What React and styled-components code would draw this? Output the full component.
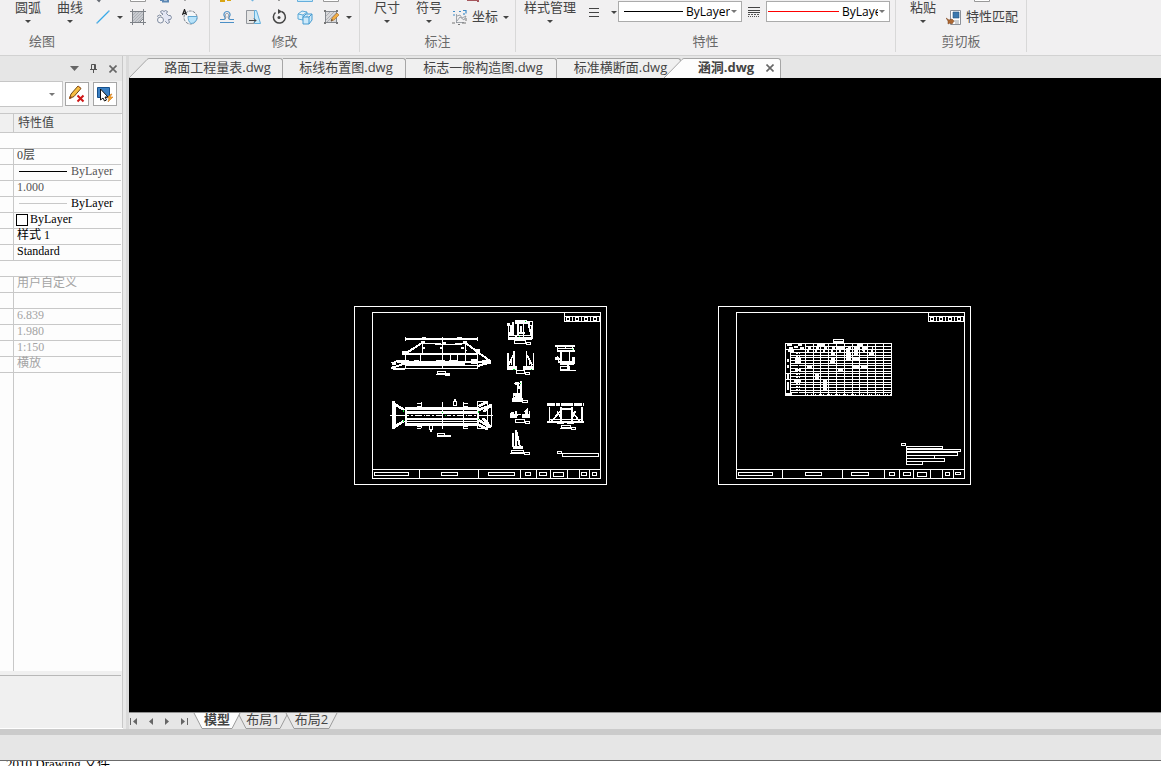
import React from "react";
import styled, { createGlobalStyle, css } from "styled-components";

const UI_FONT = '"Open Sans", "Noto Sans CJK SC", sans-serif';
const GRID_FONT = '"Liberation Serif", "Noto Sans CJK SC", serif';

const GlobalStyle = createGlobalStyle`
  *, *::before, *::after { box-sizing: border-box; }
  body { margin: 0; background: #fff; }
  button { margin: 0; padding: 0; border: 0; background: none; color: inherit; font: inherit; white-space: nowrap; }
  select { appearance: none; border: 0; padding: 0; margin: 0; background: none; font: inherit; color: inherit; min-width: 0; }
  svg { display: block; flex: none; }
`;

const Page = styled.div`
  display: flex;
  flex-direction: column;
  height: 100vh;
  overflow: hidden;
  font-family: ${UI_FONT};
  font-size: 13px;
  color: #444;
  background: #fff;
`;

/* ---------- Ribbon ---------- */
const Ribbon = styled.header`
  display: flex;
  flex: none;
  height: 56px;
  padding-bottom: 3px;
  background: #f1f0f1;
  border-bottom: 1px solid #d2d2d2;
  overflow: hidden;
`;

const Group = styled.section`
  display: flex;
  flex-direction: column;
  flex: none;
  width: ${(p) => p.$width}px;
  border-right: 1px solid #d8d8d8;
`;

const GroupBody = styled.div`
  display: flex;
  align-items: flex-start;
  height: 32px;
  padding-left: ${(p) => p.$pad}px;
`;

const GroupLabel = styled.div`
  line-height: 18px;
  color: #6a6a6a;
  text-align: center;
  ${(p) => p.$cut && css`width: 84px;`}
`;

const BigButton = styled.button`
  display: flex;
  flex-direction: column;
  align-items: center;
  gap: 6px;
  flex: none;
  width: ${(p) => p.$width || 42}px;
  line-height: 14px;
`;

const Arrow = styled.span`
  flex: none;
  border: solid transparent;
  border-width: 3px 3px 0;
  border-top-color: ${(p) => p.$color || "#444"};
`;

const ToolGrid = styled.div`
  display: grid;
  grid-template-columns: ${(p) => p.$columns};
  grid-template-rows: 4px 26px;
  align-items: center;
  justify-items: center;
`;

const Peek = styled.button`
  display: flex;
  align-self: start;
  height: 4px;
  overflow: hidden;
`;

const ToolButton = styled.button`
  display: flex;
  align-items: center;
  gap: 4px;
  line-height: 18px;
  span { padding-bottom: 2px; }
`;

const MenuButton = styled.button`
  display: flex;
  align-items: center;
  justify-content: center;
  width: ${(p) => p.$width || 12}px;
  height: 24px;
`;

const Combo = styled.label`
  display: flex;
  align-items: center;
  gap: 3px;
  flex: none;
  width: 124px;
  height: 21px;
  margin-top: 1px;
  padding: 0 4px 0 1px;
  background: #fff;
  border: 1px solid #ababab;
  color: #000;
  font-size: 12px;
  select { flex: 1; overflow: hidden; margin-right: -2px; }
`;

const Stroke = styled.svg`
  width: ${(p) => p.$width}px;
  height: 1px;
  margin-left: ${(p) => p.$indent || 0}px;
`;

/* ---------- Workspace ---------- */
const Workspace = styled.div`
  display: flex;
  flex: 1;
  min-height: 0;
  border-bottom: 6px solid #cbcbcb;
`;

const Panel = styled.aside`
  display: flex;
  flex-direction: column;
  flex: none;
  width: 123px;
  margin-bottom: 1px;
  background: #f0f0f0;
  border-right: 1px solid #c8c8c8;
`;

const Splitter = styled.div`
  flex: none;
  width: 6px;
  background: #e9e9e9;
  border-right: 3px solid #dadada;
`;

const PanelTitle = styled.div`
  display: flex;
  align-items: center;
  justify-content: flex-end;
  gap: 11px;
  height: 25px;
  padding: 0 5px 0 0;
  background: #e6e6e6;
`;

const PanelTools = styled.div`
  display: flex;
  align-items: center;
  gap: 4px;
  height: 30px;
  padding-right: 5px;
  padding-bottom: 4px;
`;

const ObjectPicker = styled.label`
  display: flex;
  align-items: center;
  flex: 1;
  height: 26px;
  margin-right: -2px;
  padding-right: 7px;
  background: #fff;
  border: 1px solid #c6c6c6;
  border-left: 0;
  select { flex: 1; }
`;

const IconButton = styled.button`
  display: grid;
  place-items: center;
  width: 24px;
  height: 24px;
  background: #fff;
  border: 1px solid #a6a6a6;
`;

const GridFrame = styled.div`
  display: flex;
  flex-direction: column;
  flex: 1;
  margin-top: 2px;
  padding-right: 1px;
  border-top: 1px solid #c8c8c8;
  background: #fdfdfd;
`;

const PropTable = styled.table`
  width: 100%;
  border-collapse: separate;
  border-spacing: 0;
  table-layout: fixed;
  font-family: ${GRID_FONT};
  font-size: 12px;
  line-height: 13px;
  color: #000;
  th, td { height: 16px; padding: 0 0 0 3px; border-bottom: 1px solid #c8c8c8; text-align: left; vertical-align: top; font-weight: 400; white-space: nowrap; }
  th { width: 14px; border-right: 1px solid #c8c8c8; }
  thead th { height: 19px; padding-top: 3px; background: #f0f0f0; color: #444; }
  thead th + th { width: auto; border-right: 0; padding-left: 4px; }
`;

const Value = styled.td`
  color: ${(p) => p.$tone || "#000"};
`;

const ValueRow = styled.div`
  display: flex;
  align-items: center;
  gap: ${(p) => p.$gap || 4}px;
  margin-left: ${(p) => (p.$outdent ? -1 : 2)}px;
`;

const Swatch = styled.span`
  width: 12px;
  height: 12px;
  border: 1px solid #000;
  background: #fff;
`;

const GridRest = styled.div`
  flex: 1;
  margin-right: 1px;
  margin-left: 13px;
  border-left: 1px solid #c8c8c8;
`;

const PanelHint = styled.div`
  flex: none;
  height: 57px;
  margin-right: 1px;
  border-top: 4px solid #f0f0f0;
  &::before { content: ""; display: block; border-top: 1px solid #b8b8b8; }
`;

const DocArea = styled.main`
  display: flex;
  flex-direction: column;
  flex: 1;
  min-width: 0;
`;

const DocTabs = styled.nav`
  display: flex;
  align-items: flex-end;
  flex: none;
  height: 22px;
  background: #e6e6e6;
`;

const DocTab = styled.button`
  display: flex;
  align-items: stretch;
  flex: none;
  height: 20px;
  line-height: 17px;
  z-index: ${(p) => (p.$active ? 1 : 0)};
  margin-left: ${(p) => (p.$active ? -17 : 0)}px;
  font-weight: ${(p) => (p.$active ? 700 : 400)};
`;

const TabFace = styled.span`
  display: flex;
  align-items: center;
  justify-content: center;
  width: ${(p) => p.$width}px;
  padding: 0 0 2px ${(p) => (p.$active ? 8 : 4)}px;
  border: solid #a6a6a6;
  border-width: 1px 1px 0 0;
  border-radius: 0 3px 0 0;
  background: ${(p) => (p.$active ? "#fdfdfd" : "#f0f0f0")};
  gap: 12px;
`;

const Canvas = styled.div`
  display: flex;
  align-items: flex-start;
  gap: 111px;
  flex: 1;
  min-height: 0;
  padding: 228px 0 0 225px;
  background: #000;
  overflow: hidden;
`;

const SheetBar = styled.nav`
  display: flex;
  align-items: flex-start;
  flex: none;
  height: 17px;
  background: #e6e6e6;
  border-top: 1px solid #8f8f8f;
`;

const Navigator = styled.div`
  display: flex;
  align-items: center;
  gap: 6px;
  height: 17px;
  padding: 0 5px 0 1px;
`;

const SheetTab = styled.button`
  display: grid;
  flex: none;
  width: ${(p) => p.$width}px;
  height: 16px;
  margin-right: -4px;
  line-height: 12px;
  justify-items: center;
  font-weight: ${(p) => (p.$active ? 700 : 400)};
  z-index: ${(p) => (p.$active ? 1 : 0)};
  & > * { grid-area: 1 / 1; }
`;

const StatusBar = styled.footer`
  flex: none;
  height: 26px;
  background: #e6e6e6;
  border-bottom: 1px solid #6b6b6b;
`;

const FileType = styled.div`
  display: flex;
  align-items: center;
  flex: none;
  height: 5px;
  padding-left: 6px;
  overflow: hidden;
  color: #000;
  font-family: ${GRID_FONT};
  font-size: 13px;
  line-height: 13px;
  white-space: pre;
`;

/* ---------- Icons ---------- */
const Icon = ({ children, size = 16, view }) => (
  <svg width={size} height={size} viewBox={view || "0 0 16 16"} fill="none" aria-hidden="true">{children}</svg>
);

const LineSample = ({ width, color, indent }) => (
  <Stroke $width={width} $indent={indent} aria-hidden="true"><rect width="100%" height="1" fill={color} /></Stroke>
);

const LineIcon = () => (
  <Icon><path d="M2 14 14 2" stroke="#35a9e8" strokeWidth="1.3" /><path d="M1 14h2M13 2h2" stroke="#8bbce0" /></Icon>
);
const HatchIcon = () => (
  <Icon>
    <path d="M2.500 2.500h11v7l-4 4h-7z" fill="#c9cbd0" stroke="#80848a" />
    <path d="m3 6 3-3M3 9l6-6M3 12l9-9M5 13l8-8M8 13l5-5" stroke="#999da4" strokeWidth=".6" />
    <path d="M0 2.500h16M0 13.500h16M2.500 0v16M13.500 0v16" stroke="#7d8187" />
  </Icon>
);
const RegionIcon = () => (
  <Icon>
    <path d="M6.500 6V4.500h-1l-1-2 2-1 1.500 1 1.500-1 2 1-1 2 2 2h2l1 2-1 2h-2l1 3-2 1-2-2H9" fill="#e3e6f3" stroke="#7f8ba0" />
    <path d="M1 7.500 3.500 6l2 1" stroke="#7f8ba0" />
    <circle cx="4.500" cy="11" r="3" fill="#f5f5f8" stroke="#7f8ba0" />
  </Icon>
);
const RevolveIcon = () => (
  <Icon>
    <circle cx="8.500" cy="8.500" r="6.500" fill="#f4f6f8" stroke="#7d838c" strokeDasharray="3 1" />
    <path d="M6 7.500h9v1a6 6 0 0 1-6 6c-2-1-3-4-3-7z" fill="#b9e3fa" stroke="#61a7d2" />
    <path d="m.5 6 2-5.500 2 5.500M1.500 4.300h2" stroke="#222" strokeWidth="1.200" />
  </Icon>
);
const OffsetIcon = () => (
  <Icon>
    <path d="M1 10.500h3.500c2 0 2-1.500 1-3-1.500-2 0-5 2.500-5s4 3 2.500 5c-1 1.500-1 3 1 3H15M1 13.500h14" stroke="#4b8fc6" strokeWidth="1.200" />
    <path d="M6 10c1-1 1-2 .5-3.500S7 4.500 8 4.500s2 .5 1.500 2S9 9 10 10" stroke="#8f949e" />
  </Icon>
);
const StretchIcon = () => (
  <Icon>
    <path d="M1.500 1.500h8v13h-8z" fill="#e5e5e5" stroke="#92969c" />
    <path d="M9.500 1.500h2l4 13h-6z" fill="#c7ebfc" stroke="#62aedb" />
    <path d="M4 11.500h7M9 9.500l2 2-2 2" stroke="#444" />
  </Icon>
);
const RotateIcon = () => (
  <Icon><path d="M4.500 3.500a6 6 0 1 0 6-1" stroke="#444" strokeWidth="1.500" /><path d="m7 0 4 2.500L7 5z" fill="#444" /><circle cx="8" cy="8.500" r="1.500" fill="#444" /></Icon>
);
const ArrayIcon = () => (
  <Icon>
    <path d="m1 5 4-3 5 1v5l-4 3-5-1zM1 5l5 1 4-3M6 6v5" fill="#d6effc" stroke="#5ba9d7" />
    <path d="m6 8 3-3h6v6l-3 4H6zM6 8h6l3-3M12 8v7" fill="#cdeafb" stroke="#479bd0" />
  </Icon>
);
const EditHatchIcon = () => (
  <Icon>
    <path d="M2.500 2.500h11v11h-11z" fill="#d7d7d9" stroke="#84888e" />
    <path d="m3 7 4-4M3 11l8-8M4 13l9-9M8 13l5-5" stroke="#aeb0b5" />
    <path d="M1 1h2v2H1zM13 1h2v2h-2zM1 13h2v2H1zM13 13h2v2h-2z" fill="#777" />
    <path d="m8 12 1-3 5-5 2 2-5 5z" fill="#f1ae45" stroke="#a76a27" strokeWidth=".6" /><path d="m8 12 .7-2L10 11z" fill="#333" />
  </Icon>
);
const CoordIcon = () => (
  <Icon>
    <path d="M4.500 5v9M4 13.500h8M5 7l3-1 2 3 4-2-2 4-4-3-3 4" stroke="#8a9098" strokeWidth=".8" />
    <path d="M1 2.500h2M1 6h2M7 2.500h2M11 1.500h3v3M12 4v2" stroke="#3e8bc8" strokeWidth="1.200" />
    <path d="M0 14h3M6 15.500h2M10 14h4M14 9v3" stroke="#777" />
  </Icon>
);
const LinesIcon = () => (
  <Icon size={12} view="0 0 12 12"><path d="M1 2.500h10M1 6.500h10M1 10.500h10" stroke="#444" strokeWidth="1.200" /></Icon>
);
const LineTypeIcon = () => (
  <Icon size={12} view="0 0 12 12">
    <path d="M0 1.500h12M0 4.500h12M0 6.500h12" stroke="#444" />
    <path d="M0 8.500h12" stroke="#555" strokeDasharray="2 1" /><path d="M0 10.500h12" stroke="#555" strokeDasharray="1 1" />
  </Icon>
);
const MatchIcon = () => (
  <Icon>
    <path d="M4.500 1.500h10v14h-10z" fill="#fff" stroke="#8b9098" />
    <path d="M7 3h6v6H7z" fill="#3c78ae" stroke="#26547e" strokeWidth=".6" /><path d="M8 12h5M9 14h4" stroke="#9aa0a7" />
    <path d="m0 9 3 2 3-1 2 2-2 3-2-1-2 1v-3z" fill="#ad6833" stroke="#784119" strokeWidth=".5" />
  </Icon>
);
const ClearIcon = () => (
  <Icon size={18} view="0 0 18 18">
    <path d="M1.500 13.500 3 9l7-8 3 2.500-7 8z" fill="#f6bd42" stroke="#6e4a18" />
    <path d="m1.500 13.500.8-2.500L4 12.500zM10 1l3 2.500" fill="#222" stroke="#b05c20" />
    <path d="m9.500 10.500 6 6m0-6-6 6" stroke="#cf1717" strokeWidth="2" />
  </Icon>
);
const SelectIcon = () => (
  <Icon size={18} view="0 0 18 18">
    <path d="M1.500 2.500h12v10h-12z" fill="#3b80c3" stroke="#15508c" />
    <path d="M4.500 4v11l2.500-2 1.500 3 2-1-1.500-3h3z" fill="#fff" stroke="#111" />
    <path d="m15 9-4 4h2l-1 4 5-5h-3l2-3z" fill="#ffa620" stroke="#bd6814" strokeWidth=".5" />
  </Icon>
);
const PinIcon = () => (
  <Icon size={9} view="0 0 9 9"><path d="M2.500 5V.5h4V5M1 5.500h7M4.500 6v3M5.500 1v4" stroke="#555" /></Icon>
);
const CloseIcon = () => (
  <Icon size={8} view="0 0 8 8"><path d="m.5.500 7 7m0-7-7 7" stroke="#666" strokeWidth="1.600" /></Icon>
);
const StepIcon = ({ forward, end }) => (
  <Icon size={10} view="0 0 10 10">
    <g transform={forward ? "matrix(-1 0 0 1 10 0)" : undefined} fill="#666"><path d="M7 1v7L3 4.500z" />{end && <path d="M0 1h1v7H0z" />}</g>
  </Icon>
);
const Sliver = ({ color, fill }) => (
  <svg width="16" height="4" viewBox="0 0 16 4" aria-hidden="true"><path d="M.5-1v2.500h15V-1" fill={fill} stroke={color} /></svg>
);
const TipSliver = ({ d, color }) => (
  <svg width="16" height="4" viewBox="0 0 16 4" fill="none" aria-hidden="true"><path d={d} stroke={color} strokeWidth="2" /></svg>
);

const TabSlope = ({ active }) => (
  <svg width="20" height="20" viewBox="0 0 20 20" aria-hidden="true">
    <path d="M0 20 18 1.500Q19 .5 20 .5V20z" fill={active ? "#fdfdfd" : "#f0f0f0"} />
    <path d="M0 20 18 1.500Q19 .5 20 .5" fill="none" stroke="#a6a6a6" />
  </svg>
);

const SheetShape = ({ width, active }) => (
  <svg width={width} height="16" viewBox={`0 0 ${width} 16`} aria-hidden="true">
    <path d={`M1 0 9 15.500H${width - 9}L${width - 1} 0`} fill={active ? "#fdfdfd" : "#e9e9e9"} stroke="#9c9c9c" />
  </svg>
);

/* ---------- Drawing sheets: viewBox units are thirds of a pixel ---------- */
const box = ([x, y, w, h], i) => <rect key={i} x={x} y={y} width={w} height={h} />;

const Frame = ({ left, dividers, boxes }) => (
  <g>
    <rect x={left + 1.5} y="19.500" width="756" height="534" />
    <rect x={left + 55.5} y="37.500" width="684" height="498" />
    <path d={`M${left + 55} 508.500h685`} />
    {dividers.map((x) => <path key={x} d={`M${x} 508V536`} />)}
    {boxes.map(box)}
    <path d={`M${left + 631.5} 37V64.500H${left + 740}M${left + 631} 49.500h109`} />
    <path d={`M${left + 636} 57h103`} strokeWidth="12" strokeDasharray="12 6 3 6" />
    <path d={`M${left + 639} 57h99`} stroke="#000" strokeWidth="6" strokeDasharray="6 21" />
  </g>
);

const PlanSheet = () => (
  <svg width="253" height="179" viewBox="12 18 759 537" fill="none" stroke="#fff" strokeWidth="3" shapeRendering="crispEdges" role="img" aria-label="涵洞">
    <Frame
      left={12}
      dividers={[208.5, 385.5, 511.5, 559.5, 601.5, 652.5, 688.5, 718.5]}
      boxes={[[73.5, 517.5, 102, 9], [274.5, 517.5, 48, 9], [415.5, 517.5, 78, 9], [526.5, 517.5, 15, 9], [568.5, 517.5, 21, 9], [610.5, 517.5, 30, 12], [694.5, 517.5, 15, 9], [727.5, 517.5, 12, 9]]}
    />
    {/* side elevation */}
    <path d="M166.500 110v12M382.500 110v12M277.500 110V207M166.500 155V206M382.500 155V206M217.500 126V160M345.500 124V185M211.500 163V195M301.500 163V192M322.500 163V185M166 205.500H384M166 196.500H384" />
    <path d="M217 130.500H250L277 133.500H310L342 130.500" strokeWidth="5" />
    <path d="M166 117H384M166 192H345" strokeWidth="6" />
    <path d="M163 162H385M140 186H420" strokeWidth="8" />
    <path d="M165 162 218 127M345 127 383 156 420 183M125 190l20-8h22M124 205l42-16M128 208H166M383 198l38-10" strokeWidth="6" />
    <g fill="#fff" stroke="none">
      {[[156, 153, 16, 12], [214, 123, 11, 9], [279, 126, 9, 9], [340, 122, 10, 9], [377, 147, 14, 12], [219, 141, 6, 6], [271, 141, 6, 6], [333, 141, 9, 6], [345, 149, 6, 5], [162, 180, 16, 16], [192, 180, 14, 9], [258, 179, 26, 13], [298, 180, 24, 12], [363, 178, 21, 14], [396, 179, 26, 13], [126, 186, 12, 9], [126, 198, 9, 10], [216, 111, 12, 6], [322, 111, 14, 6]].map(box)}
    </g>
    <path d="M261.500 213.500h24v6h-24zM286.500 219.500h12v6h-12zM258 223.500h40" />
    {/* plan */}
    <path d="M166 325.500H384M166 372.500H384" strokeWidth="8" />
    <path d="M166 334.500H384M166 363.500H384M120 346.500H165M384 346.500H428M277.500 306v80M214.500 306v16M214.500 373v12M340.500 306v80M382.500 304v82M202 310.500h12M202 319.500h12M202 378.500h12M202 385.500h12M342 310.500h12M342 319.500h12M342 378.500h12M342 385.500h12" />
    <path d="M166 346.500H384" strokeDasharray="12 6 6 6 21 4 4 4" />
    <path d="M168 339H384M168 356H384M168 320V374M383 320V374" strokeWidth="6" />
    <path d="M130 304V386M130 310 163 330M130 383 163 362M385 330 425 315M385 360 423 383M386 318 412 305M386 374 412 388M400 335 425 315M398 355 423 381" strokeWidth="8" />
    <path d="M136.500 308V383M424.500 312V380M412.500 304V390M384 304.500h28M384 385.500h28" />
    <path d="M310.500 303.500h9v12h-9zM315 297v6M238.500 375.500h9v12h-9zM243 388v8" strokeWidth="4" />
    <path d="M262.500 400.500h21v7h-21z" /><path d="M262 407.500h40" strokeWidth="5" />
    {/* section details */}
    <path d="M475.500 70V115M545.500 78V118M488.500 66V108M503 72V105M512 78V96M520 72V105M535 72 544 106M494 62H530M473 106H545M498 108V118M520 108V118M486 82 478 106M482 74v30" strokeWidth="5" />
    <path d="M496 67H537M474 114H545" strokeWidth="9" />
    <path d="M500 99H526" strokeWidth="6" />
    <path d="M537.500 64.500h10v11h-10zM471.500 70.500h7v6h-7zM494.500 122.500h33v8h-33zM528.500 126.500h13v6h-13z" />
    <path d="M473.500 160V207M550.500 160V207M491.500 154V200M529.500 154V200M475 196 489 166M547 196 531 166M484 174v20M538 174v20M470 208.500H500M520 208.500H552" strokeWidth="5" />
    <path d="M498.500 211.500h24v8h-24zM525.500 217.500h14v6h-14z" />
    <path d="M470 202H502M519 202H551" strokeWidth="10" />
    <path d="M512 244V280M499 250 506 262M492 250h18M502 260v22M490 286.500h24v6h-24zM490 282h25M488.500 297.500h27v6h-27z" strokeWidth="5" />
    <path d="M516.500 301.500h15v5h-15z" />
    <path d="M494 250h12M500 262h10M494 288h20" strokeWidth="7" />
    <path d="M481 345H504M515 345H540M481 350H502M517 350H540M488 336v10M498 334v14M524 338 530 332v14" strokeWidth="8" />
    <path d="M504 343h10" strokeWidth="5" />
    <path d="M481 338v15M538 334v20M496.500 358.500h27v8h-27zM525.500 364.500h13v6h-13z" />
    <path d="M497.500 390V440M490 398V442M499 395 510 440" strokeWidth="6" />
    <path d="M488 441H518" strokeWidth="9" />
    <path d="M483.500 450.500h38v8h-38zM523.500 457.500h15v6h-15zM480 461h46" />
    {/* pier views */}
    <path d="M616 137H675" strokeWidth="5" />
    <path d="M633 154V182M658 154V182M620 153h56M617.500 170v10M673.500 170v22M654 196v14" strokeWidth="5" />
    <path d="M621.500 144.500h50v6h-50zM622 140v6M646 137v9M668 140v6M631.500 198.500h27v10h-27zM631 210.500h46" />
    <path d="M619 170 628 181M624 186H674M670 170v16M629 192h42" strokeWidth="8" />
    <path d="M592 313H701" strokeWidth="9" strokeDasharray="24 2 12 2" />
    <path d="M598.500 322V363M696.500 322V363M632 320V364M666 320V364M630 326H670M632 332 606 363M664 332 688 363M622 334 636 360M676 334 664 360M600 358.500H698" strokeWidth="5" />
    <path d="M592 366H702M622 369h20M652 369h20" strokeWidth="6" />
    <path d="M634.500 376.500h27v7h-27zM663.500 382.500h13v6h-13zM630 385.500h34M622.500 454.500h12v6h-12zM637.500 460.500h108v8h-108z" />
    <g fill="#00e42b" stroke="none">
      {[[525, 63, 3, 3], [507, 108, 3, 3], [489, 207, 6, 3], [543, 207, 3, 3], [510, 249, 3, 3], [666, 147, 3, 3], [276, 336, 3, 3], [285, 345, 3, 3], [159, 330, 3, 6], [159, 360, 3, 6], [384, 333, 3, 6], [384, 357, 3, 3]].map(box)}
    </g>
  </svg>
);

const tableColumns = [271.5, 295.5, 316.5, 340.5, 364.5, 388.5, 412.5, 433.5, 457.5, 481.5, 505.5];
const tableRows = [157.5, 166.5, 172.5, 181.5, 190.5, 196.5, 205.5, 214.5, 220.5, 229.5, 238.5, 247.5, 253.5, 262.5, 271.5, 277.5];

const TableSheet = () => (
  <svg width="253" height="179" viewBox="9 18 759 537" fill="none" stroke="#fff" strokeWidth="3" shapeRendering="crispEdges" role="img" aria-label="涵洞工程数量表">
    <Frame
      left={9}
      dividers={[202.5, 382.5, 508.5, 553.5, 595.5, 646.5, 682.5, 715.5]}
      boxes={[[70.5, 517.5, 102, 9], [271.5, 517.5, 48, 9], [409.5, 517.5, 51, 9], [523.5, 517.5, 15, 9], [565.5, 517.5, 21, 9], [607.5, 517.5, 27, 12], [691.5, 517.5, 12, 9], [721.5, 517.5, 15, 6]]}
    />
    <rect x="211.500" y="130.500" width="318" height="156" />
    <path d="M355.500 118.500h30v9h-30zM271 138.500H530M271 147.500H530M211 148.500h60M226.500 156V278M211 220.500h16M211 238.500h16" />
    <path d="M355 126H386" strokeWidth="5" />
    {tableRows.map((y) => <path key={y} d={`M227 ${y}H530`} />)}
    {tableColumns.map((x) => <path key={x} d={`M${x} 130V286`} />)}
    <path d="M276 284H529" strokeWidth="7" strokeDasharray="16 3 2 3" />
    <path d="M279 283H526" stroke="#000" strokeDasharray="9 15" />
    <path d="M276 151H474" strokeWidth="7" strokeDasharray="6 18" />
    <path d="M278 143H474" strokeWidth="5" strokeDasharray="9 15" />
    <path d="M249 158V278" strokeWidth="11" strokeDasharray="5 4" />
    <path d="M249 158V278" stroke="#000" strokeDasharray="4 5" />
    <path d="M212 281H230M216 134h14M222 143h12M236 140h12M250 134h10M256 145h12M218 152h18" strokeWidth="6" />
    <g fill="#fff" stroke="none">
      {[[216, 177, 6, 9], [216, 195, 6, 9], [216, 222, 6, 14], [216, 246, 6, 24], [348, 156, 12, 12], [348, 171, 12, 9], [345, 180, 15, 12], [394, 156, 14, 24], [394, 144, 10, 12], [417, 141, 12, 24], [412, 171, 24, 10], [441, 141, 10, 12], [462, 156, 15, 10], [369, 205, 15, 9], [301, 222, 11, 15], [324, 240, 12, 32], [240, 173, 18, 15], [240, 206, 18, 6], [237, 240, 21, 10], [306, 132, 24, 6], [426, 132, 18, 6], [276, 198, 15, 6], [413, 198, 18, 6], [438, 198, 18, 6], [366, 138, 20, 8]].map(box)}
    </g>
    <path d="M560.500 430.500h12v6h-12zM574.500 439.500h108v6h-108zM574.500 448.500h162v6h-162zM574.500 457.500h153v9h-153zM574.500 466.500h84v9h-84zM574.500 475.500h114v9h-114zM574.500 484.500h48v9h-48z" />
  </svg>
);

/* ---------- Data ---------- */
const documents = [
  { name: "路面工程量表.dwg", width: 134 },
  { name: "标线布置图.dwg", width: 123 },
  { name: "标志一般构造图.dwg", width: 151 },
  { name: "标准横断面.dwg", width: 124 },
];

const GRAY = "#a4a4a4";

const Drop = ({ label, width }) => (
  <BigButton $width={width}><span>{label}</span><Arrow /></BigButton>
);

export default function App() {
  return (
    <>
      <GlobalStyle />
      <Page>
        <Ribbon>
          <Group $width={210}>
            <GroupBody $pad={7}>
              <Drop label="圆弧" />
              <Drop label="曲线" />
              <ToolGrid $columns="24px 10px 26px 26px 26px">
                <Peek aria-label="多段线"><TipSliver d="m1-2 3 3 2-3" color="#666b73" /></Peek><span />
                <Peek aria-label="矩形"><Sliver color="#999" fill="#fff" /></Peek>
                <Peek aria-label="三维"><TipSliver d="M4 0h4M6 1.500h6V0" color="#5b87b4" /></Peek>
                <Peek aria-label="点"><TipSliver d="M3 0v1" color="#aaa" /></Peek>
                <ToolButton aria-label="直线"><LineIcon /></ToolButton>
                <MenuButton aria-label="更多直线"><Arrow /></MenuButton>
                <ToolButton aria-label="填充"><HatchIcon /></ToolButton>
                <ToolButton aria-label="面域"><RegionIcon /></ToolButton>
                <ToolButton aria-label="旋转面"><RevolveIcon /></ToolButton>
              </ToolGrid>
            </GroupBody>
            <GroupLabel $cut>绘图</GroupLabel>
          </Group>

          <Group $width={150}>
            <GroupBody $pad={4}>
              <ToolGrid $columns="26px 26px 26px 26px 26px 10px">
                <Peek aria-label="删除"><TipSliver d="M1 1h5M8 0h4" color="#d9a514" /></Peek>
                <Peek aria-label="移动"><TipSliver d="m7 1 2-3" color="#6fb4df" /></Peek>
                <Peek aria-label="镜像"><TipSliver d="M8 0v1" color="#999" /></Peek>
                <Peek aria-label="缩放"><Sliver color="#65aedc" fill="#c9eafa" /></Peek>
                <Peek aria-label="分解"><Sliver color="#999" fill="#fff" /></Peek><span />
                <ToolButton aria-label="偏移"><OffsetIcon /></ToolButton>
                <ToolButton aria-label="拉伸"><StretchIcon /></ToolButton>
                <ToolButton aria-label="旋转"><RotateIcon /></ToolButton>
                <ToolButton aria-label="阵列"><ArrayIcon /></ToolButton>
                <ToolButton aria-label="编辑填充"><EditHatchIcon /></ToolButton>
                <MenuButton aria-label="更多编辑"><Arrow /></MenuButton>
              </ToolGrid>
            </GroupBody>
            <GroupLabel>修改</GroupLabel>
          </Group>

          <Group $width={156}>
            <GroupBody $pad={6}>
              <Drop label="尺寸" />
              <Drop label="符号" />
              <ToolGrid $columns="50px 12px">
                <Peek aria-label="引线"><TipSliver d="M0 0h12M11 0v2" color="#a5565c" /></Peek><span />
                <ToolButton><CoordIcon /><span>坐标</span></ToolButton>
                <MenuButton aria-label="更多坐标"><Arrow /></MenuButton>
              </ToolGrid>
            </GroupBody>
            <GroupLabel>标注</GroupLabel>
          </Group>

          <Group $width={380}>
            <GroupBody $pad={5}>
              <Drop label="样式管理" width={58} />
              <MenuButton $width={30} aria-label="线宽"><LinesIcon /></MenuButton>
              <MenuButton $width={9} aria-label="更多线宽"><Arrow /></MenuButton>
              <Combo>
                <LineSample width={59} color="#000" indent={4} />
                <select aria-label="线型"><option>ByLayer</option></select>
                <Arrow $color="#777" />
              </Combo>
              <MenuButton $width={24} aria-label="线型管理"><LineTypeIcon /></MenuButton>
              <Combo>
                <LineSample width={71} color="#ff0000" />
                <select aria-label="颜色"><option>ByLayer</option></select>
                <Arrow $color="#777" />
              </Combo>
            </GroupBody>
            <GroupLabel>特性</GroupLabel>
          </Group>

          <Group $width={131}>
            <GroupBody $pad={6}>
              <Drop label="粘贴" />
              <ToolGrid $columns="76px">
                <Peek aria-label="复制"><Sliver color="#999" fill="#fff" /></Peek>
                <ToolButton><MatchIcon /><span>特性匹配</span></ToolButton>
              </ToolGrid>
            </GroupBody>
            <GroupLabel>剪切板</GroupLabel>
          </Group>
        </Ribbon>

        <Workspace>
          <Panel>
            <PanelTitle>
              <MenuButton $width={8} aria-label="面板菜单"><svg width="9" height="5" aria-hidden="true"><path d="M0 0h9L4.500 5z" fill="#666" /></svg></MenuButton>
              <MenuButton $width={9} aria-label="固定"><PinIcon /></MenuButton>
              <MenuButton $width={8} aria-label="关闭面板"><CloseIcon /></MenuButton>
            </PanelTitle>
            <PanelTools>
              <ObjectPicker>
                <select aria-label="对象"><option></option></select>
                <Arrow $color="#777" />
              </ObjectPicker>
              <IconButton aria-label="清除选择"><ClearIcon /></IconButton>
              <IconButton aria-label="快速选择"><SelectIcon /></IconButton>
            </PanelTools>
            <GridFrame>
              <PropTable>
                <thead><tr><th /><th>特性值</th></tr></thead>
                <tbody>
                  <tr><td colSpan={2} /></tr>
                  <tr><th /><Value $tone="#444">0层</Value></tr>
                  <tr><th /><Value $tone="#555"><ValueRow><LineSample width={48} color="#000" />ByLayer</ValueRow></Value></tr>
                  <tr><th /><Value $tone="#555">1.000</Value></tr>
                  <tr><th /><Value><ValueRow><LineSample width={48} color="#c8c8c8" />ByLayer</ValueRow></Value></tr>
                  <tr><th /><Value><ValueRow $gap={2} $outdent><Swatch />ByLayer</ValueRow></Value></tr>
                  <tr><th /><Value>样式 1</Value></tr>
                  <tr><th /><Value>Standard</Value></tr>
                  <tr><td colSpan={2} /></tr>
                  <tr><th /><Value $tone={GRAY}>用户自定义</Value></tr>
                  <tr><th /><Value /></tr>
                  <tr><th /><Value $tone={GRAY}>6.839</Value></tr>
                  <tr><th /><Value $tone={GRAY}>1.980</Value></tr>
                  <tr><th /><Value $tone={GRAY}>1:150</Value></tr>
                  <tr><th /><Value $tone={GRAY}>横放</Value></tr>
                </tbody>
              </PropTable>
              <GridRest />
            </GridFrame>
            <PanelHint />
          </Panel>
          <Splitter />

          <DocArea>
            <DocTabs>
              {documents.map((doc, i) => (
                <DocTab key={doc.name}>
                  {i === 0 && <TabSlope />}
                  <TabFace $width={doc.width}>{doc.name}</TabFace>
                </DocTab>
              ))}
              <DocTab $active>
                <TabSlope active />
                <TabFace $width={97} $active>涵洞.dwg<CloseIcon /></TabFace>
              </DocTab>
            </DocTabs>
            <Canvas>
              <PlanSheet />
              <TableSheet />
            </Canvas>
            <SheetBar>
              <Navigator>
                <button aria-label="第一个"><StepIcon end /></button>
                <button aria-label="上一个"><StepIcon /></button>
                <button aria-label="下一个"><StepIcon forward /></button>
                <button aria-label="最后一个"><StepIcon forward end /></button>
              </Navigator>
              <SheetTab $width={48} $active><SheetShape width={48} active /><span>模型</span></SheetTab>
              <SheetTab $width={52}><SheetShape width={52} /><span>布局1</span></SheetTab>
              <SheetTab $width={53}><SheetShape width={53} /><span>布局2</span></SheetTab>
            </SheetBar>
          </DocArea>
        </Workspace>
        <StatusBar />
        <FileType>2010 Drawing 文件</FileType>
      </Page>
    </>
  );
}
